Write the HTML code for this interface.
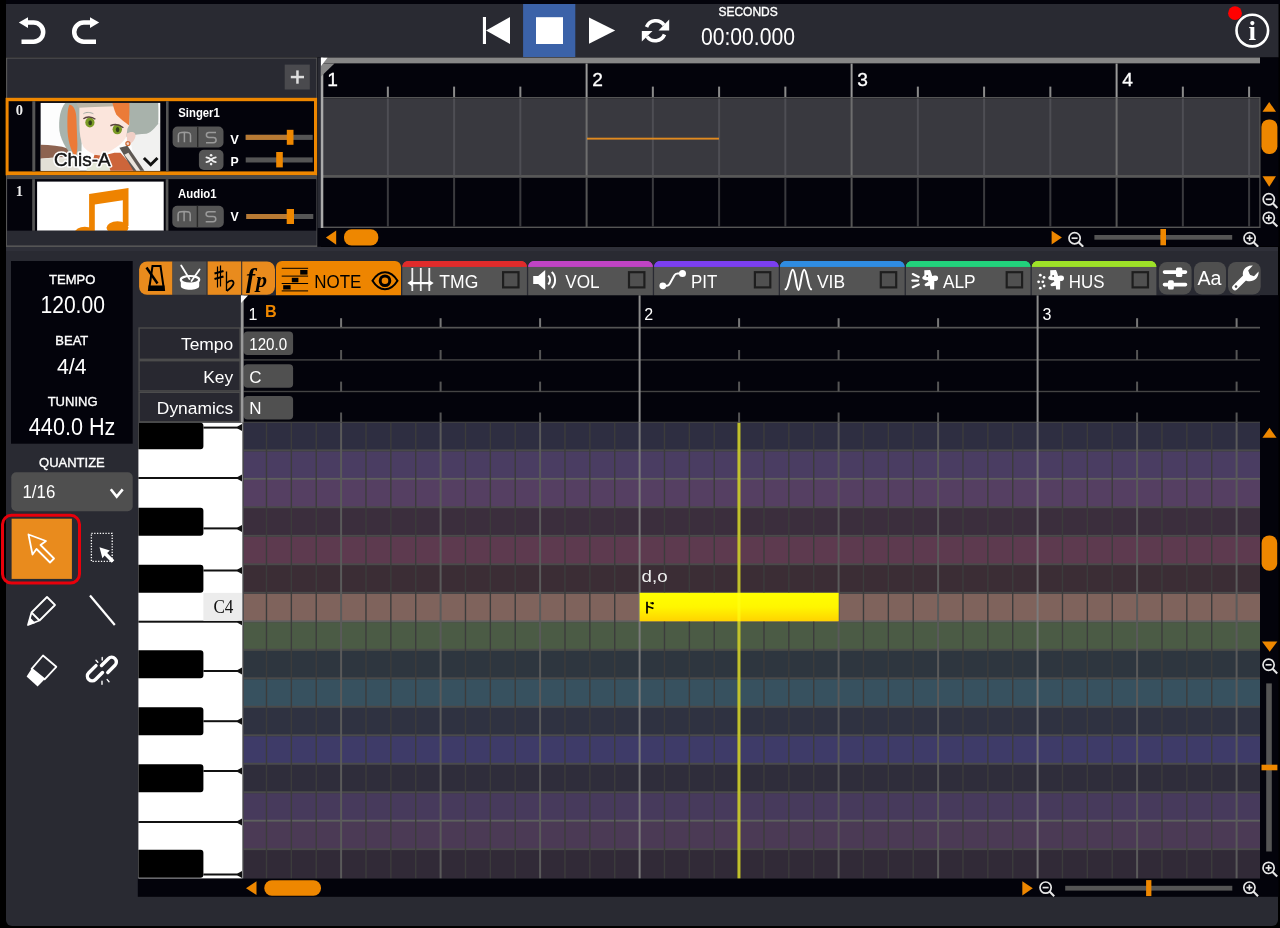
<!DOCTYPE html>
<html><head><meta charset="utf-8"><title>Editor</title>
<style>html,body{margin:0;padding:0;background:#000;width:1280px;height:928px;overflow:hidden}svg{display:block;will-change:transform}</style>
</head><body>
<svg width="1280" height="928" viewBox="0 0 1280 928" style="font-family:'Liberation Sans',sans-serif">
<rect x="0.00" y="0.00" width="1280.00" height="928.00" fill="#000" />
<rect x="6.00" y="0.00" width="1274.00" height="4.00" fill="#03030b" />
<rect x="6.00" y="4.00" width="1272.50" height="53.50" fill="#292a32" />
<path d="M21.5 41.7 H33.6 A9.6 9.6 0 0 0 33.6 22.5 H26" fill="none" stroke="#fff" stroke-width="4.5"/>
<polygon points="18.80,22.60 28.00,17.30 28.00,28.00" fill="#fff" />
<path d="M96 41.7 H83.8 A9.6 9.6 0 0 1 83.8 22.5 H93" fill="none" stroke="#fff" stroke-width="4.5"/>
<polygon points="99.20,22.60 90.00,17.30 90.00,28.00" fill="#fff" />
<rect x="523.10" y="4.00" width="52.20" height="53.00" fill="#3b62a8" />
<rect x="482.90" y="17.00" width="3.10" height="27.00" fill="#fff" />
<polygon points="486.00,30.50 510.00,17.00 510.00,44.00" fill="#fff" />
<rect x="536.00" y="17.20" width="27.00" height="26.80" fill="#fff" />
<polygon points="589.00,17.50 589.00,43.80 615.20,30.60" fill="#fff" />
<g fill="none" stroke="#fff" stroke-width="3.6"><path d="M646.5 27 A10 10 0 0 1 664 25"/><path d="M664.5 34.5 A10 10 0 0 1 647 36.5"/></g>
<polygon points="669.20,19.50 669.20,30.50 658.50,30.50" fill="#fff" />
<polygon points="641.80,41.50 641.80,31.00 652.50,31.00" fill="#fff" />
<text x="748.10" y="16.00" font-family="Liberation Sans" font-size="12" fill="#fff" text-anchor="middle" font-weight="normal" stroke="#fff" stroke-width="0.35">SECONDS</text>
<text x="747.90" y="45.40" font-family="Liberation Sans" font-size="23" fill="#fff" text-anchor="middle" font-weight="normal" textLength="94" lengthAdjust="spacingAndGlyphs">00:00.000</text>
<circle cx="1252.3" cy="30.6" r="15.8" fill="none" stroke="#fff" stroke-width="2.6"/>
<text x="1252.30" y="40.00" font-family="Liberation Serif" font-size="27" fill="#fff" text-anchor="middle" font-weight="bold" >i</text>
<circle cx="1235" cy="13.2" r="6.9" fill="#f00"/>
<rect x="6.00" y="57.50" width="311.50" height="189.50" fill="#555" />
<rect x="7.20" y="58.60" width="309.10" height="186.60" fill="#292a32" />
<rect x="284.70" y="64.60" width="25.10" height="24.90" fill="#4a4a4e" />
<rect x="290.80" y="75.80" width="13.20" height="2.50" fill="#ddd" />
<rect x="296.20" y="70.40" width="2.50" height="13.30" fill="#ddd" />
<rect x="5.60" y="97.80" width="311.80" height="77.50" fill="#ee8700" />
<rect x="8.60" y="101.20" width="305.40" height="70.20" fill="#03030b" />
<rect x="32.30" y="101.20" width="3.00" height="70.20" fill="#555" />
<rect x="166.00" y="101.20" width="2.60" height="70.20" fill="#555" />
<text x="19.40" y="115.00" font-family="Liberation Serif" font-size="14.5" fill="#eee" text-anchor="middle" font-weight="bold" >0</text>
<g id="chis"><svg x="40.4" y="102.7" width="120" height="68.1" viewBox="0 0 120 68" overflow="hidden"><rect width="120" height="68" fill="#fdfdfd"/><path d="M88 28 L120 20 L120 68 L96 68 Z" fill="#f1f1f0"/><path d="M0 42 C10 42 20 43 28 46 L30 55 C20 54 10 55 0 56 Z" fill="#8d6350"/><path d="M0 56 C10 55 20 55 30 56 L40 68 L0 68 Z" fill="#e2dfd6"/><path d="M25 0 L42 0 L41 52 L36 56 C28 50 21 40 19 28 C18 16 20 6 25 0 Z" fill="#a8b3ad"/><path d="M29 2 C33 2 36 8 36 16 L37 42 C37 48 36 52 35 54 C30 48 27 36 27 24 C27 14 27 6 29 2 Z" fill="#ec7a38"/><path d="M39 2 L90 2 L88 26 C87 34 84 38 78 43 C72 47 66 51 62 53 C56 53 48 50 43 44 C40 38 39 30 39 22 Z" fill="#fbe5dc"/><path d="M36 0 L92 0 L92 3 C70 4 50 4 38 5 Z" fill="#b9b4a6"/><path d="M72 0 L90 0 L89 23 C85 20 80 16 76 12 C74 8 73 4 72 0 Z" fill="#eb7b38"/><path d="M89 0 L118 0 C119 8 119 16 118 21 C114 25 112 29 106 31 C100 31 94 32 86 34 L87 26 L89 22 Z" fill="#a8b2ab"/><path d="M118 0 L120 0 L120 20 L118 21 Z" fill="#fdfdfd"/><ellipse cx="49.5" cy="19.8" rx="4.6" ry="5" fill="#7a9a25"/><ellipse cx="49.8" cy="20" rx="1.8" ry="2.6" fill="#34401a"/><ellipse cx="76.9" cy="26.6" rx="4.7" ry="5" fill="#7a9a25"/><ellipse cx="77.2" cy="26.8" rx="1.8" ry="2.6" fill="#34401a"/><path d="M43 16 C46 13.5 51 13.5 55 16.5" stroke="#5a4440" stroke-width="1.4" fill="none"/><path d="M70 23 C74 21 79 21.5 83 25" stroke="#5a4440" stroke-width="1.4" fill="none"/><path d="M43 11 C46 9 50 9.5 53 11" stroke="#9aa59e" stroke-width="0.9" fill="none"/><path d="M86 31 C91 28 96 29 95 34 C94 38 91 41 87 42 Z" fill="#f0cfc6"/><circle cx="87.5" cy="40.8" r="2" fill="none" stroke="#cf6a34" stroke-width="1.3"/><path d="M54 52 L62 53 L74 50 L80 50 L96 68 L50 68 Z" fill="#cd653a"/><path d="M79 45 L87 43 L104 68 L93 68 Z" fill="#5d5752"/><path d="M84 52 L88 50 L100 68 L96 68 Z" fill="#e9e4dc"/><path d="M48 60 L68 60 L70 68 L46 68 Z" fill="#e4e8d8"/><text x="13.6" y="63.6" font-family="Liberation Sans" font-size="17.6" fill="#fff" stroke="#fff" stroke-width="3.4" stroke-linejoin="round" textLength="56.6" lengthAdjust="spacingAndGlyphs">Chis-A</text><text x="13.6" y="63.6" font-family="Liberation Sans" font-size="17.6" fill="#151515" stroke="#151515" stroke-width="0.45" textLength="56.6" lengthAdjust="spacingAndGlyphs">Chis-A</text><path d="M103.5 55.3 L110.3 62 L117.1 55.3" fill="none" stroke="#111" stroke-width="3"/></svg></g>
<text x="178.30" y="117.30" font-family="Liberation Sans" font-size="12" fill="#fff" text-anchor="start" font-weight="bold" textLength="41.5" lengthAdjust="spacingAndGlyphs">Singer1</text>
<rect x="172.6" y="126.6" width="50.900000000000006" height="20.900000000000006" rx="5" fill="#555"/>
<rect x="197.00" y="126.60" width="1.40" height="20.90" fill="#2a2a2a" />
<g transform="translate(-0.20,0.00)" fill="none" stroke="#9a9a9a" stroke-width="1.5"><path d="M178.6 142.2 V135.2 C178.6 132.8 180 132.3 184.6 132.3 C189.2 132.3 190.7 132.8 190.7 135.2 V142.2 M184.6 132.5 V142.2"/><path d="M216.2 132.6 H209.2 C207.2 132.6 206.6 133.6 206.6 135 C206.6 136.4 207.2 137.4 209.2 137.4 H213.6 C215.6 137.4 216.3 138.4 216.3 140 C216.3 141.6 215.6 142.7 213.6 142.7 H206.2"/></g>
<rect x="198.9" y="149.7" width="24.6" height="20.3" rx="5" fill="#555"/>
<g fill="none" stroke="#eee" stroke-width="1.7" stroke-linecap="round"><path d="M206.4 157.3 Q209 157.6 211.1 159.7 Q213.2 157.6 215.8 157.3 M206.4 162.2 Q209 161.9 211.1 159.7 Q213.2 161.9 215.8 162.2"/></g><circle cx="211.1" cy="155.3" r="1.3" fill="#eee"/><circle cx="211.1" cy="164.1" r="1.3" fill="#eee"/><circle cx="211.1" cy="159.7" r="1.2" fill="#eee"/>
<text x="230.20" y="143.60" font-family="Liberation Sans" font-size="13.2" fill="#fff" text-anchor="start" font-weight="bold" textLength="8.6" lengthAdjust="spacingAndGlyphs">V</text>
<rect x="245.70" y="134.80" width="67.00" height="5.10" fill="#555" />
<rect x="245.70" y="134.80" width="44.30" height="5.10" fill="#b87a34" />
<rect x="286.80" y="129.80" width="6.70" height="15.00" fill="#ee8700" />
<text x="230.60" y="166.40" font-family="Liberation Sans" font-size="13" fill="#fff" text-anchor="start" font-weight="bold" textLength="8.2" lengthAdjust="spacingAndGlyphs">P</text>
<rect x="245.70" y="157.40" width="67.00" height="5.10" fill="#555" />
<rect x="276.20" y="152.00" width="6.60" height="15.40" fill="#ee8700" />
<rect x="7.20" y="175.30" width="309.10" height="3.90" fill="#4a4a4a" />
<rect x="7.20" y="179.20" width="309.10" height="51.60" fill="#03030b" />
<rect x="32.20" y="179.20" width="2.70" height="51.60" fill="#555" />
<rect x="165.70" y="179.20" width="2.70" height="51.60" fill="#555" />
<text x="19.40" y="195.60" font-family="Liberation Serif" font-size="14.5" fill="#eee" text-anchor="middle" font-weight="bold" >1</text>
<rect x="37.10" y="181.60" width="126.60" height="49.20" fill="#fff" />
<g fill="#ee8300"><polygon points="89.1,194.1 128.5,188.1 128.5,226 122.8,226 122.8,200.2 94.8,204.5 94.8,231 89.1,231"/><ellipse cx="84.8" cy="233" rx="10" ry="6.2"/><ellipse cx="117.5" cy="227.8" rx="11" ry="6.5"/></g>
<rect x="37.10" y="230.80" width="126.60" height="4.20" fill="#292a32" />
<text x="178.00" y="197.80" font-family="Liberation Sans" font-size="12" fill="#fff" text-anchor="start" font-weight="bold" textLength="38.6" lengthAdjust="spacingAndGlyphs">Audio1</text>
<rect x="172.3" y="205.7" width="51.5" height="21.700000000000017" rx="5" fill="#555"/>
<rect x="196.70" y="205.70" width="1.40" height="21.70" fill="#2a2a2a" />
<g transform="translate(-0.50,79.10)" fill="none" stroke="#9a9a9a" stroke-width="1.5"><path d="M178.6 142.2 V135.2 C178.6 132.8 180 132.3 184.6 132.3 C189.2 132.3 190.7 132.8 190.7 135.2 V142.2 M184.6 132.5 V142.2"/><path d="M216.2 132.6 H209.2 C207.2 132.6 206.6 133.6 206.6 135 C206.6 136.4 207.2 137.4 209.2 137.4 H213.6 C215.6 137.4 216.3 138.4 216.3 140 C216.3 141.6 215.6 142.7 213.6 142.7 H206.2"/></g>
<text x="230.60" y="221.40" font-family="Liberation Sans" font-size="13.2" fill="#fff" text-anchor="start" font-weight="bold" textLength="8.2" lengthAdjust="spacingAndGlyphs">V</text>
<rect x="246.30" y="214.00" width="67.00" height="5.00" fill="#555" />
<rect x="246.30" y="214.00" width="43.70" height="5.00" fill="#b87a34" />
<rect x="286.70" y="209.00" width="7.30" height="15.00" fill="#ee8700" />
<rect x="7.20" y="230.80" width="309.10" height="14.40" fill="#292a32" />
<rect x="317.50" y="57.50" width="961.00" height="188.90" fill="#03030b" />
<rect x="317.50" y="57.50" width="3.50" height="188.90" fill="#292a32" />
<rect x="321.00" y="57.50" width="939.00" height="6.10" fill="#878787" />
<rect x="321.00" y="63.60" width="939.00" height="33.40" fill="#03030b" />
<rect x="321.00" y="97.00" width="939.00" height="1.50" fill="#555" />
<rect x="321.00" y="98.50" width="939.00" height="76.50" fill="#39393f" />
<rect x="321.00" y="175.00" width="939.00" height="2.00" fill="#555" />
<rect x="321.00" y="177.00" width="939.00" height="49.60" fill="#03030b" />
<rect x="321.00" y="226.60" width="939.00" height="1.40" fill="#555" />
<rect x="321.00" y="175.30" width="939.00" height="2.50" fill="#585858" />
<rect x="386.85" y="86.60" width="2.00" height="10.40" fill="#8a8a8a" />
<rect x="386.85" y="98.50" width="2.00" height="76.80" fill="#4e4e54" />
<rect x="386.85" y="177.80" width="2.00" height="48.80" fill="#3a3a3e" />
<rect x="453.10" y="86.60" width="2.00" height="10.40" fill="#8a8a8a" />
<rect x="453.10" y="98.50" width="2.00" height="76.80" fill="#4e4e54" />
<rect x="453.10" y="177.80" width="2.00" height="48.80" fill="#3a3a3e" />
<rect x="519.35" y="86.60" width="2.00" height="10.40" fill="#8a8a8a" />
<rect x="519.35" y="98.50" width="2.00" height="76.80" fill="#4e4e54" />
<rect x="519.35" y="177.80" width="2.00" height="48.80" fill="#3a3a3e" />
<rect x="585.60" y="63.60" width="2.00" height="33.40" fill="#999" />
<rect x="585.60" y="97.00" width="2.00" height="78.30" fill="#6e6e6e" />
<rect x="585.60" y="177.80" width="2.00" height="50.20" fill="#555" />
<rect x="651.85" y="86.60" width="2.00" height="10.40" fill="#8a8a8a" />
<rect x="651.85" y="98.50" width="2.00" height="76.80" fill="#4e4e54" />
<rect x="651.85" y="177.80" width="2.00" height="48.80" fill="#3a3a3e" />
<rect x="718.10" y="86.60" width="2.00" height="10.40" fill="#8a8a8a" />
<rect x="718.10" y="98.50" width="2.00" height="76.80" fill="#4e4e54" />
<rect x="718.10" y="177.80" width="2.00" height="48.80" fill="#3a3a3e" />
<rect x="784.35" y="86.60" width="2.00" height="10.40" fill="#8a8a8a" />
<rect x="784.35" y="98.50" width="2.00" height="76.80" fill="#4e4e54" />
<rect x="784.35" y="177.80" width="2.00" height="48.80" fill="#3a3a3e" />
<rect x="850.60" y="63.60" width="2.00" height="33.40" fill="#999" />
<rect x="850.60" y="97.00" width="2.00" height="78.30" fill="#6e6e6e" />
<rect x="850.60" y="177.80" width="2.00" height="50.20" fill="#555" />
<rect x="916.85" y="86.60" width="2.00" height="10.40" fill="#8a8a8a" />
<rect x="916.85" y="98.50" width="2.00" height="76.80" fill="#4e4e54" />
<rect x="916.85" y="177.80" width="2.00" height="48.80" fill="#3a3a3e" />
<rect x="983.10" y="86.60" width="2.00" height="10.40" fill="#8a8a8a" />
<rect x="983.10" y="98.50" width="2.00" height="76.80" fill="#4e4e54" />
<rect x="983.10" y="177.80" width="2.00" height="48.80" fill="#3a3a3e" />
<rect x="1049.35" y="86.60" width="2.00" height="10.40" fill="#8a8a8a" />
<rect x="1049.35" y="98.50" width="2.00" height="76.80" fill="#4e4e54" />
<rect x="1049.35" y="177.80" width="2.00" height="48.80" fill="#3a3a3e" />
<rect x="1115.60" y="63.60" width="2.00" height="33.40" fill="#999" />
<rect x="1115.60" y="97.00" width="2.00" height="78.30" fill="#6e6e6e" />
<rect x="1115.60" y="177.80" width="2.00" height="50.20" fill="#555" />
<rect x="1181.85" y="86.60" width="2.00" height="10.40" fill="#8a8a8a" />
<rect x="1181.85" y="98.50" width="2.00" height="76.80" fill="#4e4e54" />
<rect x="1181.85" y="177.80" width="2.00" height="48.80" fill="#3a3a3e" />
<rect x="1248.10" y="86.60" width="2.00" height="10.40" fill="#8a8a8a" />
<rect x="1248.10" y="98.50" width="2.00" height="76.80" fill="#4e4e54" />
<rect x="1248.10" y="177.80" width="2.00" height="48.80" fill="#3a3a3e" />
<text x="327.20" y="86.40" font-family="Liberation Sans" font-size="19.2" fill="#fff" text-anchor="start" font-weight="normal" stroke="#fff" stroke-width="0.3">1</text>
<text x="592.20" y="86.40" font-family="Liberation Sans" font-size="19.2" fill="#fff" text-anchor="start" font-weight="normal" stroke="#fff" stroke-width="0.3">2</text>
<text x="857.20" y="86.40" font-family="Liberation Sans" font-size="19.2" fill="#fff" text-anchor="start" font-weight="normal" stroke="#fff" stroke-width="0.3">3</text>
<text x="1122.20" y="86.40" font-family="Liberation Sans" font-size="19.2" fill="#fff" text-anchor="start" font-weight="normal" stroke="#fff" stroke-width="0.3">4</text>
<rect x="1259.30" y="97.00" width="1.20" height="131.00" fill="#555" />
<rect x="320.80" y="57.50" width="2.50" height="170.50" fill="#aaa" />
<polygon points="321.00,63.60 334.50,63.60 321.00,76.50" fill="#878787" />
<polygon points="321.00,57.80 327.50,57.80 321.00,66.00" fill="#fff" />
<rect x="587.00" y="137.70" width="132.00" height="1.90" fill="#e08a20" />
<rect x="317.70" y="228.00" width="942.30" height="18.40" fill="#03030b" />
<polygon points="325.90,237.60 336.20,230.50 336.20,244.70" fill="#ee8700" />
<rect x="344" y="229.2" width="34.3" height="16.3" rx="7.5" fill="#ee8700"/>
<polygon points="1051.60,230.70 1051.60,244.40 1061.90,237.50" fill="#ee8700" />
<g fill="none" stroke="#e6e6e6" stroke-width="1.70"><circle cx="1074.60" cy="238.20" r="5.60"/><path d="M1078.60 242.20 L1083.20 246.80" stroke-width="2.10"/><path d="M1071.60 238.20 H1077.60"/></g>
<rect x="1094.40" y="235.00" width="137.80" height="4.70" fill="#555" />
<rect x="1160.40" y="229.00" width="5.60" height="16.30" fill="#ee8700" />
<g fill="none" stroke="#e6e6e6" stroke-width="1.70"><circle cx="1249.60" cy="238.20" r="5.60"/><path d="M1253.60 242.20 L1258.20 246.80" stroke-width="2.10"/><path d="M1246.60 238.20 H1252.60"/><path d="M1249.60 235.20 V241.20"/></g>
<polygon points="1262.50,111.70 1276.00,111.70 1269.20,101.90" fill="#ee8700" />
<rect x="1261.4" y="119.4" width="16" height="34.6" rx="7.5" fill="#ee8700"/>
<polygon points="1262.50,176.30 1276.00,176.30 1269.20,186.80" fill="#ee8700" />
<g fill="none" stroke="#e6e6e6" stroke-width="1.70"><circle cx="1268.80" cy="199.30" r="5.60"/><path d="M1272.80 203.30 L1277.40 207.90" stroke-width="2.10"/><path d="M1265.80 199.30 H1271.80"/></g>
<g fill="none" stroke="#e6e6e6" stroke-width="1.70"><circle cx="1268.80" cy="217.90" r="5.60"/><path d="M1272.80 221.90 L1277.40 226.50" stroke-width="2.10"/><path d="M1265.80 217.90 H1271.80"/><path d="M1268.80 214.90 V220.90"/></g>
<path d="M6 247 H1278 V920 A6 6 0 0 1 1272 926 H12 A6 6 0 0 1 6 920 Z" fill="#292a32"/>
<rect x="6.00" y="247.00" width="1272.00" height="4.00" fill="#2f3039" />
<rect x="11.00" y="261.00" width="121.70" height="182.70" fill="#03030b" />
<text x="72.20" y="284.00" font-family="Liberation Sans" font-size="13" fill="#fff" text-anchor="middle" font-weight="normal" stroke="#fff" stroke-width="0.35">TEMPO</text>
<text x="72.70" y="313.20" font-family="Liberation Sans" font-size="23" fill="#fff" text-anchor="middle" font-weight="normal" textLength="64.5" lengthAdjust="spacingAndGlyphs">120.00</text>
<text x="71.80" y="344.70" font-family="Liberation Sans" font-size="13" fill="#fff" text-anchor="middle" font-weight="normal" stroke="#fff" stroke-width="0.35">BEAT</text>
<text x="71.70" y="374.20" font-family="Liberation Sans" font-size="22" fill="#fff" text-anchor="middle" font-weight="normal" textLength="29.5" lengthAdjust="spacingAndGlyphs">4/4</text>
<text x="72.60" y="405.80" font-family="Liberation Sans" font-size="13" fill="#fff" text-anchor="middle" font-weight="normal" stroke="#fff" stroke-width="0.35">TUNING</text>
<text x="72.10" y="435.10" font-family="Liberation Sans" font-size="23" fill="#fff" text-anchor="middle" font-weight="normal" textLength="86.5" lengthAdjust="spacingAndGlyphs">440.0 Hz</text>
<text x="71.90" y="466.80" font-family="Liberation Sans" font-size="13" fill="#fff" text-anchor="middle" font-weight="normal" stroke="#fff" stroke-width="0.35">QUANTIZE</text>
<rect x="11.3" y="472.3" width="121.4" height="38.9" rx="5" fill="#4f4f4f"/>
<text x="22.50" y="498.30" font-family="Liberation Sans" font-size="17.5" fill="#fff" text-anchor="start" font-weight="normal" textLength="32.8" lengthAdjust="spacingAndGlyphs">1/16</text>
<path d="M110.8 489.3 L116.7 496.6 L122.7 489.3" fill="none" stroke="#fff" stroke-width="2.6"/>
<rect x="11.60" y="518.70" width="60.30" height="60.20" fill="#e98b1d" />
<rect x="2.5" y="515.3" width="77" height="67.7" rx="9" fill="none" stroke="#e8000b" stroke-width="3"/>
<g id="tools"><path d="M28.5 534.5 L46 541 L40.5 545 L54 558.5 L50 562.5 L36.5 549 L32.5 554.5 Z" fill="none" stroke="#fff" stroke-width="1.8" stroke-linejoin="round"/><rect x="91.4" y="533.4" width="20.8" height="28" fill="none" stroke="#fff" stroke-width="1.3" stroke-dasharray="1.3 1.5"/><path d="M99.5 547.3 L109.8 550.6 L107.2 553 L114.3 560.2 L111.7 562.8 L104.6 555.6 L102.4 558.2 Z" fill="#fff"/><path d="M28 625 L31.5 612.5 L47 597 L55 605 L39.5 620.5 Z M31.5 612.5 L39.5 620.5" fill="none" stroke="#fff" stroke-width="1.8" stroke-linejoin="round"/><path d="M28 625 L30 617.5 L35.5 623 Z" fill="#fff"/><path d="M90 595.5 L114.8 625" stroke="#fff" stroke-width="2.2"/><path d="M43 655.5 L56.3 666.8 L44.6 679.3 L31.6 668.8 Z" fill="none" stroke="#fff" stroke-width="1.8" stroke-linejoin="round"/><path d="M31.6 668.8 L44.6 679.3 L37.6 686.4 L26.6 676.6 Z" fill="#fff"/><g fill="none" stroke="#fff" stroke-width="3.4" stroke-linecap="round"><path d="M101.5 665.5 L108.3 658.7 A4.7 4.7 0 0 1 115 665.3 L107.8 672.5"/><path d="M102.5 672.5 L95.5 679.5 A4.7 4.7 0 0 1 88.8 672.8 L96 665.6"/></g><g stroke="#fff" stroke-width="1.4" stroke-linecap="round"><path d="M96 660.3 L97.8 662.2 M102.2 657.4 V660 M102 681.3 V684.2 M107.2 679.6 L109 681.7"/></g></g>
<g id="toolbar"><path d="M147.1 261.4 H172.5 V294.8 H147.1 A8 8 0 0 1 139.1 286.8 V269.4 A8 8 0 0 1 147.1 261.4 Z" fill="#e98b1d"/><rect x="172.50" y="261.40" width="34.00" height="33.40" fill="#4f4f4f" /><rect x="207.60" y="261.40" width="33.60" height="33.40" fill="#e98b1d" /><path d="M242.2 261.4 H267 A8 8 0 0 1 275 269.4 V286.8 A8 8 0 0 1 267 294.8 H242.2 Z" fill="#e98b1d"/><path d="M149 290 L152.5 266 H160.5 L164 290 Z" fill="none" stroke="#000" stroke-width="2"/><rect x="148.50" y="285.50" width="16.00" height="5.50" fill="#000" /><path d="M146.5 267.5 L157.5 283.5" stroke="#000" stroke-width="2.4"/><g fill="none" stroke="#fff"><ellipse cx="190" cy="279.8" rx="9.2" ry="3.8" stroke-width="2.2"/></g><path d="M180.8 280 V286 C180.8 291 199.2 291 199.2 286 V280 C199.2 284.5 180.8 284.5 180.8 280 Z" fill="#fff"/><path d="M181.2 265.5 L189.5 279 M199.6 269.5 L191.5 281" stroke="#fff" stroke-width="1.8" stroke-linecap="round"/><g stroke="#000" fill="none"><path d="M217.5 266.5 V287.5 M220.5 265.5 V286.5" stroke-width="1.2"/><path d="M214.5 273.5 L223.5 271 M214.5 279 L223.5 276.5" stroke-width="2.2"/><path d="M226.5 271.5 V291" stroke-width="1.3"/><path d="M226.8 283 C230 279.5 234 280 233.5 283.5 C233 286.5 229.5 289 226.8 291" stroke-width="1.8"/></g><text x="246.00" y="286.50" font-family="Liberation Serif" font-size="27" fill="#000" text-anchor="start" font-weight="bold" font-style="italic">f</text><text x="256.00" y="287.00" font-family="Liberation Serif" font-size="22" fill="#000" text-anchor="start" font-weight="bold" font-style="italic">p</text><path d="M276 295.4 V267.1 A6 6 0 0 1 282 261.1 H395 A6 6 0 0 1 401 267.1 V295.4 Z" fill="#ee8500"/><g fill="#000"><rect x="281.70" y="267.80" width="26.40" height="1.00" fill="#000" /><rect x="281.70" y="275.60" width="26.40" height="1.00" fill="#000" /><rect x="281.70" y="283.00" width="26.40" height="1.00" fill="#000" /><rect x="281.70" y="290.40" width="26.40" height="1.00" fill="#000" /><rect x="300.20" y="270.00" width="7.30" height="4.60" fill="#000" /><rect x="291.80" y="277.80" width="6.60" height="4.50" fill="#000" /><rect x="283.20" y="285.20" width="7.40" height="4.30" fill="#000" /></g><text x="314.30" y="287.60" font-family="Liberation Sans" font-size="18.5" fill="#000" text-anchor="start" font-weight="normal" textLength="47.1" lengthAdjust="spacingAndGlyphs">NOTE</text><path d="M372.5 280.8 C377 273.5 381 272.3 385 272.3 C389 272.3 393 273.5 397.5 280.8 C393 288 389 289.3 385 289.3 C381 289.3 377 288 372.5 280.8 Z" fill="none" stroke="#000" stroke-width="2"/><circle cx="385" cy="280.8" r="4.8" fill="none" stroke="#000" stroke-width="3"/><path d="M402.30 295.4 V267.1 A6 6 0 0 1 408.30 261.1 H520.90 A6 6 0 0 1 526.90 267.1 V295.4 Z" fill="#545454"/><path d="M402.30 266.7 V267.1 A6 6 0 0 1 408.30 261.1 H520.90 A6 6 0 0 1 526.90 267.1 V266.7 Z" fill="#e02b2b"/><rect x="402.30" y="266.69" width="124.60" height="0.02" fill="#e02b2b" /><path d="M402.30 261.1 m0 0" /><path d="M402.30 266.7 V267.1 A6 6 0 0 1 408.30 261.1 H520.90 A6 6 0 0 1 526.90 267.1 V266.7 Z" fill="#e02b2b"/><text x="439.30" y="287.70" font-family="Liberation Sans" font-size="18.5" fill="#fff" text-anchor="start" font-weight="normal" textLength="39" lengthAdjust="spacingAndGlyphs">TMG</text><rect x="503.10" y="272.2" width="15.4" height="15.2" fill="#505050" stroke="#1e1e1e" stroke-width="2.2"/><g transform="translate(402.30,0)"><g stroke="#eee" stroke-width="1.8"><path d="M10 268 V291 M18.5 268 V291 M27 268 V291"/></g><path d="M8 283.1 H29.5" stroke="#fff" stroke-width="2.2"/><path d="M5 283.1 L10 280 V286.2 Z M31.4 283.1 L26.4 280 V286.2 Z" fill="#fff"/></g><path d="M528.20 295.4 V267.1 A6 6 0 0 1 534.20 261.1 H646.80 A6 6 0 0 1 652.80 267.1 V295.4 Z" fill="#545454"/><path d="M528.20 266.7 V267.1 A6 6 0 0 1 534.20 261.1 H646.80 A6 6 0 0 1 652.80 267.1 V266.7 Z" fill="#c043c4"/><rect x="528.20" y="266.69" width="124.60" height="0.02" fill="#c043c4" /><path d="M528.20 261.1 m0 0" /><path d="M528.20 266.7 V267.1 A6 6 0 0 1 534.20 261.1 H646.80 A6 6 0 0 1 652.80 267.1 V266.7 Z" fill="#c043c4"/><text x="565.20" y="287.70" font-family="Liberation Sans" font-size="18.5" fill="#fff" text-anchor="start" font-weight="normal" textLength="34.4" lengthAdjust="spacingAndGlyphs">VOL</text><rect x="629.00" y="272.2" width="15.4" height="15.2" fill="#505050" stroke="#1e1e1e" stroke-width="2.2"/><g transform="translate(528.20,0)"><path d="M5 276 H10 L17 270 V290 L10 284 H5 Z" fill="#fff"/><path d="M20 275.5 C22.5 278 22.5 282 20 284.5 M23.5 272 C28 276 28 284 23.5 288" fill="none" stroke="#fff" stroke-width="2"/></g><path d="M654.10 295.4 V267.1 A6 6 0 0 1 660.10 261.1 H772.70 A6 6 0 0 1 778.70 267.1 V295.4 Z" fill="#545454"/><path d="M654.10 266.7 V267.1 A6 6 0 0 1 660.10 261.1 H772.70 A6 6 0 0 1 778.70 267.1 V266.7 Z" fill="#7b3ff0"/><rect x="654.10" y="266.69" width="124.60" height="0.02" fill="#7b3ff0" /><path d="M654.10 261.1 m0 0" /><path d="M654.10 266.7 V267.1 A6 6 0 0 1 660.10 261.1 H772.70 A6 6 0 0 1 778.70 267.1 V266.7 Z" fill="#7b3ff0"/><text x="691.10" y="287.70" font-family="Liberation Sans" font-size="18.5" fill="#fff" text-anchor="start" font-weight="normal" textLength="26.3" lengthAdjust="spacingAndGlyphs">PIT</text><rect x="754.90" y="272.2" width="15.4" height="15.2" fill="#505050" stroke="#1e1e1e" stroke-width="2.2"/><g transform="translate(654.10,0)"><path d="M8.7 285.8 L13 285.8 C14.5 285.8 15 285 15.8 283.5 L20.2 275.5 C21 274 21.8 273.5 23.5 273.5 L28.4 273.5" fill="none" stroke="#fff" stroke-width="2"/><circle cx="8.7" cy="285.8" r="3.4" fill="#fff"/><circle cx="28.4" cy="273.5" r="3.5" fill="#fff"/></g><path d="M780.00 295.4 V267.1 A6 6 0 0 1 786.00 261.1 H898.60 A6 6 0 0 1 904.60 267.1 V295.4 Z" fill="#545454"/><path d="M780.00 266.7 V267.1 A6 6 0 0 1 786.00 261.1 H898.60 A6 6 0 0 1 904.60 267.1 V266.7 Z" fill="#2f8ce2"/><rect x="780.00" y="266.69" width="124.60" height="0.02" fill="#2f8ce2" /><path d="M780.00 261.1 m0 0" /><path d="M780.00 266.7 V267.1 A6 6 0 0 1 786.00 261.1 H898.60 A6 6 0 0 1 904.60 267.1 V266.7 Z" fill="#2f8ce2"/><text x="817.00" y="287.70" font-family="Liberation Sans" font-size="18.5" fill="#fff" text-anchor="start" font-weight="normal" textLength="28.1" lengthAdjust="spacingAndGlyphs">VIB</text><rect x="880.80" y="272.2" width="15.4" height="15.2" fill="#505050" stroke="#1e1e1e" stroke-width="2.2"/><g transform="translate(780.00,0)"><path d="M5.6 289.3 C9 289 10 269.7 12.8 269.7 C15.6 269.7 16.2 289.9 18.4 289.9 C20.6 289.9 21.4 269.7 24.2 269.7 C27 269.7 28 289 31.1 289.3" fill="none" stroke="#fff" stroke-width="2.1" stroke-linecap="round"/></g><path d="M905.90 295.4 V267.1 A6 6 0 0 1 911.90 261.1 H1024.50 A6 6 0 0 1 1030.50 267.1 V295.4 Z" fill="#545454"/><path d="M905.90 266.7 V267.1 A6 6 0 0 1 911.90 261.1 H1024.50 A6 6 0 0 1 1030.50 267.1 V266.7 Z" fill="#22d27c"/><rect x="905.90" y="266.69" width="124.60" height="0.02" fill="#22d27c" /><path d="M905.90 261.1 m0 0" /><path d="M905.90 266.7 V267.1 A6 6 0 0 1 911.90 261.1 H1024.50 A6 6 0 0 1 1030.50 267.1 V266.7 Z" fill="#22d27c"/><text x="942.90" y="287.70" font-family="Liberation Sans" font-size="18.5" fill="#fff" text-anchor="start" font-weight="normal" textLength="32.7" lengthAdjust="spacingAndGlyphs">ALP</text><rect x="1006.70" y="272.2" width="15.4" height="15.2" fill="#505050" stroke="#1e1e1e" stroke-width="2.2"/><g transform="translate(905.90,0)"><path d="M6.9 274.1 L12.8 277 M6.4 280.6 H12.1 M6.9 287.2 L12.9 284.4" stroke="#fff" stroke-width="2.2" stroke-linecap="round"/><path d="M18.4 270.2 L24.2 270 C25.2 272 25.8 274 26.3 276 L28.5 275.6 C31 275 32.4 276.5 32.2 278.4 C32 280.5 30.2 281.3 28.4 281 L28.3 289.6 L24.3 289.6 L24 285.8 L20 286.2 C18.6 286.1 18.2 284.6 19.2 283.8 L22.6 281.4 L22 280.2 C19 280.2 16.8 279.8 16.4 278.2 C16.3 277 17.4 276.2 18.5 275.5 Z" fill="#fff"/><circle cx="21.3" cy="275.9" r="1" fill="#545454"/></g><path d="M1031.80 295.4 V267.1 A6 6 0 0 1 1037.80 261.1 H1150.40 A6 6 0 0 1 1156.40 267.1 V295.4 Z" fill="#545454"/><path d="M1031.80 266.7 V267.1 A6 6 0 0 1 1037.80 261.1 H1150.40 A6 6 0 0 1 1156.40 267.1 V266.7 Z" fill="#9ee228"/><rect x="1031.80" y="266.69" width="124.60" height="0.02" fill="#9ee228" /><path d="M1031.80 261.1 m0 0" /><path d="M1031.80 266.7 V267.1 A6 6 0 0 1 1037.80 261.1 H1150.40 A6 6 0 0 1 1156.40 267.1 V266.7 Z" fill="#9ee228"/><text x="1068.80" y="287.70" font-family="Liberation Sans" font-size="18.5" fill="#fff" text-anchor="start" font-weight="normal" textLength="35.7" lengthAdjust="spacingAndGlyphs">HUS</text><rect x="1132.60" y="272.2" width="15.4" height="15.2" fill="#505050" stroke="#1e1e1e" stroke-width="2.2"/><g transform="translate(1031.80,0)"><g fill="#fff"><circle cx="8.5" cy="275.2" r="1.4"/><circle cx="12.3" cy="277.4" r="1.4"/><circle cx="6.8" cy="281.8" r="1.4"/><circle cx="11" cy="281.8" r="1.4"/><circle cx="12.3" cy="286" r="1.4"/><circle cx="8.5" cy="288.2" r="1.4"/></g><path d="M18.4 270.2 L24.2 270 C25.2 272 25.8 274 26.3 276 L28.5 275.6 C31 275 32.4 276.5 32.2 278.4 C32 280.5 30.2 281.3 28.4 281 L28.3 289.6 L24.3 289.6 L24 285.8 L20 286.2 C18.6 286.1 18.2 284.6 19.2 283.8 L22.6 281.4 L22 280.2 C19 280.2 16.8 279.8 16.4 278.2 C16.3 277 17.4 276.2 18.5 275.5 Z" fill="#fff"/><circle cx="21.3" cy="275.9" r="1" fill="#545454"/></g><rect x="1158.9" y="261.9" width="32.70" height="32.6" rx="8" fill="#4f4f4f"/><rect x="1194" y="261.9" width="32.00" height="32.6" rx="8" fill="#4f4f4f"/><rect x="1228" y="261.9" width="32.70" height="32.6" rx="8" fill="#4f4f4f"/><path d="M1164.5 272.1 H1185.5 M1164.5 284.6 H1185.5" stroke="#fff" stroke-width="3.6" stroke-linecap="round"/><rect x="1176" y="267.6" width="6.3" height="9.4" rx="1.5" fill="#fff"/><rect x="1168" y="280.2" width="5.8" height="9.4" rx="1.5" fill="#fff"/><text x="1209.50" y="285.20" font-family="Liberation Sans" font-size="20" fill="#fff" text-anchor="middle" font-weight="normal" textLength="24" lengthAdjust="spacingAndGlyphs">Aa</text><path d="M1235 287.5 L1247 275.5" stroke="#fff" stroke-width="5.6" stroke-linecap="round"/><path d="M1244.2 278.8 C1240.5 272.5 1244.5 265.2 1252.8 265.6 L1248.2 270.6 L1249.8 274.8 L1254 276.2 L1258.6 271.6 C1259 279.5 1251.5 283.2 1245.8 280.4 Z" fill="#fff"/><circle cx="1236" cy="286.6" r="1.3" fill="#4a4a4a"/></g>
<rect x="241.00" y="295.40" width="1037.50" height="127.40" fill="#03030b" />
<rect x="1260.00" y="295.40" width="18.50" height="601.40" fill="#03030b" />
<rect x="243.60" y="326.80" width="1016.40" height="1.70" fill="#555" />
<g id="cond"><rect x="139.1" y="328.00" width="101" height="31.30" fill="#282830" stroke="#4c4c4c" stroke-width="1.4"/><text x="233.20" y="350.10" font-family="Liberation Sans" font-size="17.4" fill="#fff" text-anchor="end" font-weight="normal" >Tempo</text><rect x="243.6" y="331.60" width="49.5" height="23.5" rx="4" fill="#505050"/><text x="249.30" y="350.10" font-family="Liberation Sans" font-size="17" fill="#fff" text-anchor="start" font-weight="normal" textLength="37.8" lengthAdjust="spacingAndGlyphs">120.0</text><rect x="243.60" y="359.20" width="1016.40" height="1.40" fill="#444" /><rect x="139.1" y="360.70" width="101" height="30.20" fill="#282830" stroke="#4c4c4c" stroke-width="1.4"/><text x="233.20" y="382.80" font-family="Liberation Sans" font-size="17.4" fill="#fff" text-anchor="end" font-weight="normal" >Key</text><rect x="243.6" y="364.30" width="49.5" height="23.5" rx="4" fill="#505050"/><text x="249.30" y="382.80" font-family="Liberation Sans" font-size="17" fill="#fff" text-anchor="start" font-weight="normal" >C</text><rect x="243.60" y="390.80" width="1016.40" height="1.40" fill="#444" /><rect x="139.1" y="392.30" width="101" height="29.50" fill="#282830" stroke="#4c4c4c" stroke-width="1.4"/><text x="233.20" y="414.40" font-family="Liberation Sans" font-size="17.4" fill="#fff" text-anchor="end" font-weight="normal" >Dynamics</text><rect x="243.6" y="395.90" width="49.5" height="23.5" rx="4" fill="#505050"/><text x="249.30" y="414.40" font-family="Liberation Sans" font-size="17" fill="#fff" text-anchor="start" font-weight="normal" >N</text><rect x="243.60" y="421.70" width="1016.40" height="1.40" fill="#444" /><rect x="340.10" y="318.20" width="2.00" height="8.80" fill="#777" /><rect x="340.10" y="350.00" width="2.00" height="10.00" fill="#555" /><rect x="340.10" y="381.60" width="2.00" height="10.00" fill="#555" /><rect x="340.10" y="412.50" width="2.00" height="10.00" fill="#555" /><rect x="439.60" y="318.20" width="2.00" height="8.80" fill="#777" /><rect x="439.60" y="350.00" width="2.00" height="10.00" fill="#555" /><rect x="439.60" y="381.60" width="2.00" height="10.00" fill="#555" /><rect x="439.60" y="412.50" width="2.00" height="10.00" fill="#555" /><rect x="539.10" y="318.20" width="2.00" height="8.80" fill="#777" /><rect x="539.10" y="350.00" width="2.00" height="10.00" fill="#555" /><rect x="539.10" y="381.60" width="2.00" height="10.00" fill="#555" /><rect x="539.10" y="412.50" width="2.00" height="10.00" fill="#555" /><rect x="638.60" y="295.40" width="2.00" height="127.40" fill="#8a8a8a" /><rect x="738.10" y="318.20" width="2.00" height="8.80" fill="#777" /><rect x="738.10" y="350.00" width="2.00" height="10.00" fill="#555" /><rect x="738.10" y="381.60" width="2.00" height="10.00" fill="#555" /><rect x="738.10" y="412.50" width="2.00" height="10.00" fill="#555" /><rect x="837.60" y="318.20" width="2.00" height="8.80" fill="#777" /><rect x="837.60" y="350.00" width="2.00" height="10.00" fill="#555" /><rect x="837.60" y="381.60" width="2.00" height="10.00" fill="#555" /><rect x="837.60" y="412.50" width="2.00" height="10.00" fill="#555" /><rect x="937.10" y="318.20" width="2.00" height="8.80" fill="#777" /><rect x="937.10" y="350.00" width="2.00" height="10.00" fill="#555" /><rect x="937.10" y="381.60" width="2.00" height="10.00" fill="#555" /><rect x="937.10" y="412.50" width="2.00" height="10.00" fill="#555" /><rect x="1036.60" y="295.40" width="2.00" height="127.40" fill="#8a8a8a" /><rect x="1136.10" y="318.20" width="2.00" height="8.80" fill="#777" /><rect x="1136.10" y="350.00" width="2.00" height="10.00" fill="#555" /><rect x="1136.10" y="381.60" width="2.00" height="10.00" fill="#555" /><rect x="1136.10" y="412.50" width="2.00" height="10.00" fill="#555" /><rect x="1235.60" y="318.20" width="2.00" height="8.80" fill="#777" /><rect x="1235.60" y="350.00" width="2.00" height="10.00" fill="#555" /><rect x="1235.60" y="381.60" width="2.00" height="10.00" fill="#555" /><rect x="1235.60" y="412.50" width="2.00" height="10.00" fill="#555" /></g>
<g id="grid"><rect x="243.60" y="422.80" width="1016.40" height="28.49" fill="#2e2e41" /><rect x="243.60" y="451.29" width="1016.40" height="28.49" fill="#4a3d62" /><rect x="243.60" y="479.78" width="1016.40" height="28.49" fill="#553f62" /><rect x="243.60" y="508.27" width="1016.40" height="28.49" fill="#3b2e3d" /><rect x="243.60" y="536.76" width="1016.40" height="28.49" fill="#5d3a4f" /><rect x="243.60" y="565.25" width="1016.40" height="28.49" fill="#3b2d35" /><rect x="243.60" y="593.74" width="1016.40" height="28.49" fill="#7f635c" /><rect x="243.60" y="622.23" width="1016.40" height="28.49" fill="#4b5b45" /><rect x="243.60" y="650.72" width="1016.40" height="28.49" fill="#2e363f" /><rect x="243.60" y="679.21" width="1016.40" height="28.49" fill="#37515f" /><rect x="243.60" y="707.70" width="1016.40" height="28.49" fill="#2f3241" /><rect x="243.60" y="736.19" width="1016.40" height="28.49" fill="#3e3b68" /><rect x="243.60" y="764.68" width="1016.40" height="28.49" fill="#2f2d3b" /><rect x="243.60" y="793.17" width="1016.40" height="28.49" fill="#473a5c" /><rect x="243.60" y="821.66" width="1016.40" height="28.49" fill="#4b3a55" /><rect x="243.60" y="850.15" width="1016.40" height="28.49" fill="#312a37" /><rect x="243.60" y="449.39" width="1016.40" height="1.90" fill="#4a4a4a" /><rect x="243.60" y="477.88" width="1016.40" height="1.90" fill="#5f5f5f" /><rect x="243.60" y="506.37" width="1016.40" height="1.90" fill="#4a4a4a" /><rect x="243.60" y="534.86" width="1016.40" height="1.90" fill="#4a4a4a" /><rect x="243.60" y="563.35" width="1016.40" height="1.90" fill="#4a4a4a" /><rect x="243.60" y="591.84" width="1016.40" height="1.90" fill="#4a4a4a" /><rect x="243.60" y="620.33" width="1016.40" height="1.90" fill="#5f5f5f" /><rect x="243.60" y="648.82" width="1016.40" height="1.90" fill="#4a4a4a" /><rect x="243.60" y="677.31" width="1016.40" height="1.90" fill="#4a4a4a" /><rect x="243.60" y="705.80" width="1016.40" height="1.90" fill="#4a4a4a" /><rect x="243.60" y="734.29" width="1016.40" height="1.90" fill="#4a4a4a" /><rect x="243.60" y="762.78" width="1016.40" height="1.90" fill="#4a4a4a" /><rect x="243.60" y="791.27" width="1016.40" height="1.90" fill="#4a4a4a" /><rect x="243.60" y="819.76" width="1016.40" height="1.90" fill="#5f5f5f" /><rect x="243.60" y="848.25" width="1016.40" height="1.90" fill="#4a4a4a" /><rect x="265.78" y="422.80" width="1.40" height="455.80" fill="#3c3c3c" /><rect x="290.65" y="422.80" width="1.40" height="455.80" fill="#3c3c3c" /><rect x="315.53" y="422.80" width="1.40" height="455.80" fill="#3c3c3c" /><rect x="340.10" y="422.80" width="2.00" height="455.80" fill="#5a5a5a" /><rect x="365.28" y="422.80" width="1.40" height="455.80" fill="#3c3c3c" /><rect x="390.15" y="422.80" width="1.40" height="455.80" fill="#3c3c3c" /><rect x="415.03" y="422.80" width="1.40" height="455.80" fill="#3c3c3c" /><rect x="439.60" y="422.80" width="2.00" height="455.80" fill="#5a5a5a" /><rect x="464.78" y="422.80" width="1.40" height="455.80" fill="#3c3c3c" /><rect x="489.65" y="422.80" width="1.40" height="455.80" fill="#3c3c3c" /><rect x="514.52" y="422.80" width="1.40" height="455.80" fill="#3c3c3c" /><rect x="539.10" y="422.80" width="2.00" height="455.80" fill="#5a5a5a" /><rect x="564.27" y="422.80" width="1.40" height="455.80" fill="#3c3c3c" /><rect x="589.15" y="422.80" width="1.40" height="455.80" fill="#3c3c3c" /><rect x="614.02" y="422.80" width="1.40" height="455.80" fill="#3c3c3c" /><rect x="638.60" y="422.80" width="2.00" height="455.80" fill="#7c7c7c" /><rect x="663.77" y="422.80" width="1.40" height="455.80" fill="#3c3c3c" /><rect x="688.65" y="422.80" width="1.40" height="455.80" fill="#3c3c3c" /><rect x="713.52" y="422.80" width="1.40" height="455.80" fill="#3c3c3c" /><rect x="738.10" y="422.80" width="2.00" height="455.80" fill="#5a5a5a" /><rect x="763.27" y="422.80" width="1.40" height="455.80" fill="#3c3c3c" /><rect x="788.15" y="422.80" width="1.40" height="455.80" fill="#3c3c3c" /><rect x="813.02" y="422.80" width="1.40" height="455.80" fill="#3c3c3c" /><rect x="837.60" y="422.80" width="2.00" height="455.80" fill="#5a5a5a" /><rect x="862.77" y="422.80" width="1.40" height="455.80" fill="#3c3c3c" /><rect x="887.65" y="422.80" width="1.40" height="455.80" fill="#3c3c3c" /><rect x="912.52" y="422.80" width="1.40" height="455.80" fill="#3c3c3c" /><rect x="937.10" y="422.80" width="2.00" height="455.80" fill="#5a5a5a" /><rect x="962.27" y="422.80" width="1.40" height="455.80" fill="#3c3c3c" /><rect x="987.15" y="422.80" width="1.40" height="455.80" fill="#3c3c3c" /><rect x="1012.02" y="422.80" width="1.40" height="455.80" fill="#3c3c3c" /><rect x="1036.60" y="422.80" width="2.00" height="455.80" fill="#7c7c7c" /><rect x="1061.77" y="422.80" width="1.40" height="455.80" fill="#3c3c3c" /><rect x="1086.65" y="422.80" width="1.40" height="455.80" fill="#3c3c3c" /><rect x="1111.52" y="422.80" width="1.40" height="455.80" fill="#3c3c3c" /><rect x="1136.10" y="422.80" width="2.00" height="455.80" fill="#5a5a5a" /><rect x="1161.27" y="422.80" width="1.40" height="455.80" fill="#3c3c3c" /><rect x="1186.15" y="422.80" width="1.40" height="455.80" fill="#3c3c3c" /><rect x="1211.02" y="422.80" width="1.40" height="455.80" fill="#3c3c3c" /><rect x="1235.60" y="422.80" width="2.00" height="455.80" fill="#5a5a5a" /><defs><linearGradient id="ng" x1="0" y1="0" x2="0" y2="1"><stop offset="0" stop-color="#ffff00"/><stop offset="0.5" stop-color="#fff600"/><stop offset="1" stop-color="#ffd300"/></linearGradient></defs><rect x="639.60" y="592.80" width="199.10" height="28.50" fill="url(#ng)" /><path d="M647 601.7 V613.4 M647.3 606.3 C649.6 607 651.6 607.5 653.4 608.4" fill="none" stroke="#000" stroke-width="1.7"/><circle cx="652.6" cy="603.3" r="1.2" fill="#000"/><circle cx="651" cy="603" r="0.8" fill="#000"/><text x="641.60" y="582.20" font-family="Liberation Sans" font-size="16.5" fill="#eee" text-anchor="start" font-weight="normal" textLength="26" lengthAdjust="spacingAndGlyphs">d,o</text><rect x="737.40" y="422.80" width="3.10" height="455.80" fill="rgba(255,255,20,0.63)" /></g>
<g id="piano"><rect x="138.40" y="422.80" width="104.20" height="455.80" fill="#fff" /><path d="M138.4 422.80 H200.4 A3 3 0 0 1 203.4 425.80 V446.20 A3 3 0 0 1 200.4 449.20 H138.4 Z" fill="#000"/><path d="M138.4 507.77 H200.4 A3 3 0 0 1 203.4 510.77 V532.77 A3 3 0 0 1 200.4 535.77 H138.4 Z" fill="#000"/><path d="M138.4 564.75 H200.4 A3 3 0 0 1 203.4 567.75 V589.75 A3 3 0 0 1 200.4 592.75 H138.4 Z" fill="#000"/><path d="M138.4 650.22 H200.4 A3 3 0 0 1 203.4 653.22 V675.22 A3 3 0 0 1 200.4 678.22 H138.4 Z" fill="#000"/><path d="M138.4 707.20 H200.4 A3 3 0 0 1 203.4 710.20 V732.20 A3 3 0 0 1 200.4 735.20 H138.4 Z" fill="#000"/><path d="M138.4 764.18 H200.4 A3 3 0 0 1 203.4 767.18 V789.18 A3 3 0 0 1 200.4 792.18 H138.4 Z" fill="#000"/><path d="M138.4 849.65 H200.4 A3 3 0 0 1 203.4 852.65 V874.65 A3 3 0 0 1 200.4 877.65 H138.4 Z" fill="#000"/><rect x="138.40" y="477.00" width="102.60" height="2.00" fill="#111" /><polygon points="237.5,477.00 242,474.50 242,481.50 237.5,479.00" fill="#111"/><rect x="138.40" y="620.70" width="102.60" height="2.00" fill="#111" /><polygon points="237.5,620.70 242,618.20 242,625.20 237.5,622.70" fill="#111"/><rect x="138.40" y="821.00" width="102.60" height="2.00" fill="#111" /><polygon points="237.5,821.00 242,818.50 242,825.50 237.5,823.00" fill="#111"/><rect x="203.40" y="426.60" width="37.60" height="2.00" fill="#111" /><polygon points="237.5,426.60 242,424.10 242,431.10 237.5,428.60" fill="#111"/><rect x="203.40" y="527.40" width="37.60" height="2.00" fill="#111" /><polygon points="237.5,527.40 242,524.90 242,531.90 237.5,529.40" fill="#111"/><rect x="203.40" y="569.50" width="37.60" height="2.00" fill="#111" /><polygon points="237.5,569.50 242,567.00 242,574.00 237.5,571.50" fill="#111"/><rect x="203.40" y="670.00" width="37.60" height="2.00" fill="#111" /><polygon points="237.5,670.00 242,667.50 242,674.50 237.5,672.00" fill="#111"/><rect x="203.40" y="720.20" width="37.60" height="2.00" fill="#111" /><polygon points="237.5,720.20 242,717.70 242,724.70 237.5,722.20" fill="#111"/><rect x="203.40" y="770.00" width="37.60" height="2.00" fill="#111" /><polygon points="237.5,770.00 242,767.50 242,774.50 237.5,772.00" fill="#111"/><rect x="203.40" y="873.50" width="37.60" height="2.00" fill="#111" /><polygon points="237.5,873.50 242,871.00 242,878.00 237.5,875.50" fill="#111"/><rect x="203.40" y="592.90" width="38.60" height="28.00" fill="#ececec" /><text x="233.40" y="612.50" font-family="Liberation Serif" font-size="18.5" fill="#111" text-anchor="end" font-weight="normal" textLength="20" lengthAdjust="spacingAndGlyphs">C4</text></g>
<rect x="240.80" y="295.40" width="2.80" height="127.40" fill="#9a9a9a" />
<rect x="242.60" y="422.80" width="1.00" height="455.80" fill="#555" />
<polygon points="241.00,295.60 248.00,295.60 241.00,303.00" fill="#fff" />
<text x="248.60" y="320.40" font-family="Liberation Sans" font-size="16" fill="#fff" text-anchor="start" font-weight="normal" >1</text>
<text x="265.00" y="317.20" font-family="Liberation Sans" font-size="16.2" fill="#ee8700" text-anchor="start" font-weight="bold" >B</text>
<text x="644.30" y="320.40" font-family="Liberation Sans" font-size="16" fill="#fff" text-anchor="start" font-weight="normal" >2</text>
<text x="1042.50" y="320.40" font-family="Liberation Sans" font-size="16" fill="#fff" text-anchor="start" font-weight="normal" >3</text>
<rect x="137.80" y="878.60" width="1122.20" height="18.20" fill="#03030b" />
<polygon points="246.00,888.20 256.50,881.30 256.50,895.10" fill="#ee8700" />
<rect x="264.3" y="880.2" width="56.7" height="15.5" rx="7.5" fill="#ee8700"/>
<polygon points="1022.30,881.20 1022.30,895.40 1032.80,888.30" fill="#ee8700" />
<g fill="none" stroke="#e6e6e6" stroke-width="1.70"><circle cx="1045.60" cy="887.60" r="5.60"/><path d="M1049.60 891.60 L1054.20 896.20" stroke-width="2.10"/><path d="M1042.60 887.60 H1048.60"/></g>
<rect x="1065.20" y="885.80" width="167.10" height="4.80" fill="#555" />
<rect x="1146.10" y="880.10" width="5.30" height="16.00" fill="#ee8700" />
<g fill="none" stroke="#e6e6e6" stroke-width="1.70"><circle cx="1249.40" cy="887.60" r="5.60"/><path d="M1253.40 891.60 L1258.00 896.20" stroke-width="2.10"/><path d="M1246.40 887.60 H1252.40"/><path d="M1249.40 884.60 V890.60"/></g>
<polygon points="1262.40,437.80 1276.60,437.80 1269.50,427.80" fill="#ee8700" />
<rect x="1261.6" y="535.4" width="15.6" height="35.3" rx="7.5" fill="#ee8700"/>
<polygon points="1262.00,641.40 1277.40,641.40 1269.70,651.80" fill="#ee8700" />
<g fill="none" stroke="#e6e6e6" stroke-width="1.70"><circle cx="1268.60" cy="664.80" r="5.60"/><path d="M1272.60 668.80 L1277.20 673.40" stroke-width="2.10"/><path d="M1265.60 664.80 H1271.60"/></g>
<rect x="1266.20" y="683.40" width="5.60" height="168.10" fill="#555" />
<rect x="1261.50" y="764.70" width="15.90" height="5.60" fill="#ee8700" />
<g fill="none" stroke="#e6e6e6" stroke-width="1.70"><circle cx="1268.60" cy="867.90" r="5.60"/><path d="M1272.60 871.90 L1277.20 876.50" stroke-width="2.10"/><path d="M1265.60 867.90 H1271.60"/><path d="M1268.60 864.90 V870.90"/></g>
</svg></body></html>
